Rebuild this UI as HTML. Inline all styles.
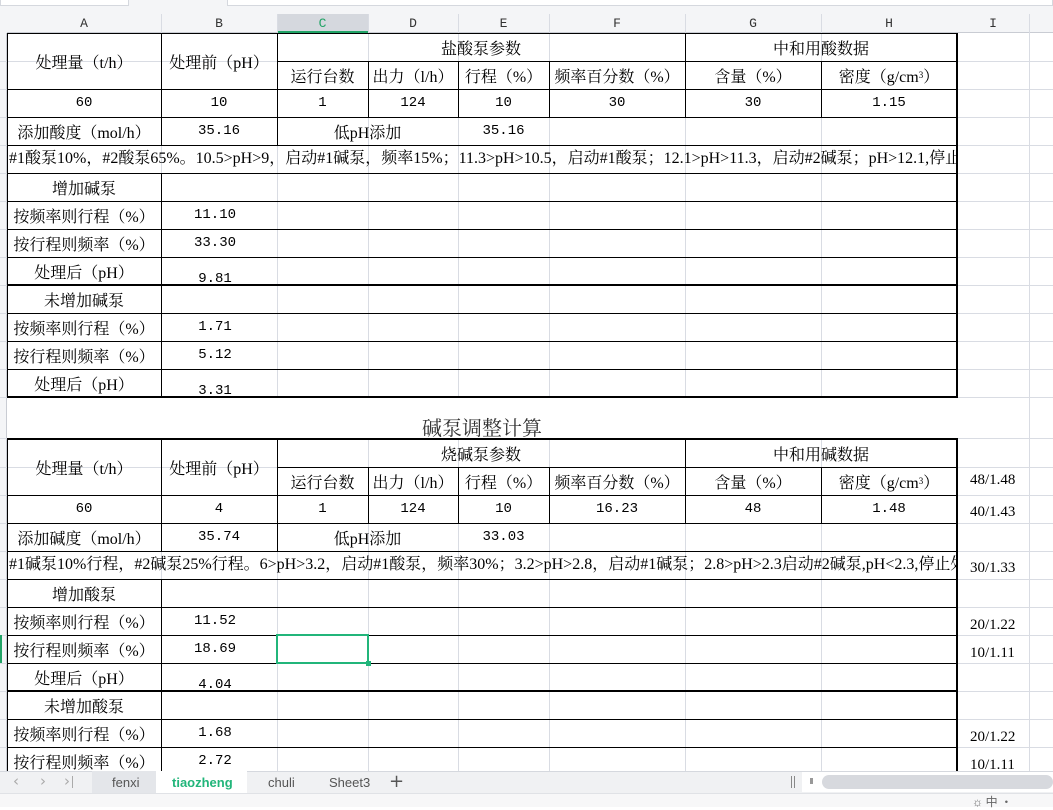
<!DOCTYPE html>
<html><head><meta charset="utf-8"><style>
*{margin:0;padding:0;box-sizing:border-box}
body{width:1053px;height:807px;overflow:hidden;background:#fff;position:relative;font-family:"Liberation Serif","Noto Serif CJK SC",serif;color:#000}
.a{position:absolute}
.g{position:absolute;background:#d9dce3}
.k{position:absolute;background:#000}
.c{position:absolute;display:flex;align-items:center;justify-content:center;white-space:nowrap;font-size:16px;height:28px}
.n{font-family:"Liberation Mono",monospace;font-size:14px}
.lo{align-items:flex-end;padding-bottom:0px;height:32px}
.h{position:absolute;top:14px;height:19px;font-family:"Liberation Mono",monospace;font-size:13px;color:#333;display:flex;align-items:center;justify-content:center}
.i{position:absolute;left:970px;font-size:15px;font-family:"Liberation Serif",serif}
.t{position:absolute;left:9px;width:948px;overflow:hidden;white-space:nowrap;font-size:16px;height:28px;line-height:28px}
sup{font-size:9px}
</style></head><body>
<div class="a" style="left:0;top:0;width:1053px;height:14px;background:#f4f5f7"></div>
<div class="a" style="left:0;top:0;width:129px;height:6px;background:#fff;border:1px solid #d5d8de;border-top:none"></div>
<div class="a" style="left:227px;top:0;width:826px;height:6px;background:#fff;border:1px solid #d5d8de;border-top:none"></div>
<div class="a" style="left:0;top:14px;width:1053px;height:19px;background:#f4f5f7;border-bottom:1px solid #c9ccd3"></div>
<div class="a" style="left:277px;top:14px;width:91px;height:19px;background:#d5d8de;border-bottom:2px solid #21a366"></div>
<div class="a" style="left:0;top:14px;width:7px;height:757px;background:#f4f5f7;border-right:1px solid #c9ccd3"></div>
<div class="h" style="left:7px;width:154px">A</div>
<div class="h" style="left:161px;width:116px">B</div>
<div class="h" style="left:277px;width:91px;color:#21a366">C</div>
<div class="h" style="left:368px;width:90px">D</div>
<div class="h" style="left:458px;width:91px">E</div>
<div class="h" style="left:549px;width:136px">F</div>
<div class="h" style="left:685px;width:136px">G</div>
<div class="h" style="left:821px;width:136px">H</div>
<div class="h" style="left:957px;width:72px">I</div>
<div class="g" style="left:161px;top:14px;width:1px;height:757px"></div>
<div class="g" style="left:277px;top:14px;width:1px;height:757px"></div>
<div class="g" style="left:368px;top:14px;width:1px;height:757px"></div>
<div class="g" style="left:458px;top:14px;width:1px;height:757px"></div>
<div class="g" style="left:549px;top:14px;width:1px;height:757px"></div>
<div class="g" style="left:685px;top:14px;width:1px;height:757px"></div>
<div class="g" style="left:821px;top:14px;width:1px;height:757px"></div>
<div class="g" style="left:1029px;top:14px;width:1px;height:757px"></div>
<div class="g" style="left:0;top:61px;width:1053px;height:1px"></div>
<div class="g" style="left:0;top:89px;width:1053px;height:1px"></div>
<div class="g" style="left:0;top:117px;width:1053px;height:1px"></div>
<div class="g" style="left:0;top:145px;width:1053px;height:1px"></div>
<div class="g" style="left:0;top:173px;width:1053px;height:1px"></div>
<div class="g" style="left:0;top:201px;width:1053px;height:1px"></div>
<div class="g" style="left:0;top:229px;width:1053px;height:1px"></div>
<div class="g" style="left:0;top:257px;width:1053px;height:1px"></div>
<div class="g" style="left:0;top:285px;width:1053px;height:1px"></div>
<div class="g" style="left:0;top:313px;width:1053px;height:1px"></div>
<div class="g" style="left:0;top:341px;width:1053px;height:1px"></div>
<div class="g" style="left:0;top:369px;width:1053px;height:1px"></div>
<div class="g" style="left:0;top:397px;width:1053px;height:1px"></div>
<div class="g" style="left:0;top:438px;width:1053px;height:1px"></div>
<div class="g" style="left:0;top:467px;width:1053px;height:1px"></div>
<div class="g" style="left:0;top:495px;width:1053px;height:1px"></div>
<div class="g" style="left:0;top:523px;width:1053px;height:1px"></div>
<div class="g" style="left:0;top:551px;width:1053px;height:1px"></div>
<div class="g" style="left:0;top:579px;width:1053px;height:1px"></div>
<div class="g" style="left:0;top:607px;width:1053px;height:1px"></div>
<div class="g" style="left:0;top:635px;width:1053px;height:1px"></div>
<div class="g" style="left:0;top:663px;width:1053px;height:1px"></div>
<div class="g" style="left:0;top:691px;width:1053px;height:1px"></div>
<div class="g" style="left:0;top:719px;width:1053px;height:1px"></div>
<div class="g" style="left:0;top:747px;width:1053px;height:1px"></div>
<div class="a" style="left:0;top:14px;width:7px;height:19px;background:#f4f5f7"></div>
<div class="a" style="left:0;top:635px;width:2px;height:28px;background:#21a366"></div>

<div class="k" style="left:7px;top:33px;width:950px;height:1px"></div>
<div class="k" style="left:277px;top:61px;width:680px;height:1px"></div>
<div class="k" style="left:7px;top:89px;width:950px;height:1px"></div>
<div class="k" style="left:7px;top:117px;width:950px;height:1px"></div>
<div class="k" style="left:7px;top:145px;width:950px;height:1px"></div>
<div class="k" style="left:7px;top:173px;width:950px;height:1px"></div>
<div class="k" style="left:7px;top:201px;width:950px;height:1px"></div>
<div class="k" style="left:7px;top:229px;width:950px;height:1px"></div>
<div class="k" style="left:7px;top:257px;width:950px;height:1px"></div>
<div class="k" style="left:7px;top:284px;width:950px;height:2px"></div>
<div class="k" style="left:7px;top:313px;width:950px;height:1px"></div>
<div class="k" style="left:7px;top:341px;width:950px;height:1px"></div>
<div class="k" style="left:7px;top:369px;width:950px;height:1px"></div>
<div class="k" style="left:7px;top:396px;width:950px;height:2px"></div>
<div class="k" style="left:7px;top:33px;width:1px;height:364px"></div>
<div class="k" style="left:161px;top:33px;width:1px;height:112px"></div>
<div class="k" style="left:161px;top:173px;width:1px;height:224px"></div>
<div class="k" style="left:277px;top:33px;width:1px;height:112px"></div>
<div class="k" style="left:368px;top:61px;width:1px;height:56px"></div>
<div class="k" style="left:458px;top:61px;width:1px;height:56px"></div>
<div class="k" style="left:549px;top:61px;width:1px;height:56px"></div>
<div class="k" style="left:685px;top:33px;width:1px;height:84px"></div>
<div class="k" style="left:821px;top:61px;width:1px;height:56px"></div>
<div class="k" style="left:956px;top:33px;width:2px;height:365px"></div>

<div class="c" style="left:7px;top:33px;width:154px;height:56px">处理量（t/h）</div>
<div class="c" style="left:161px;top:33px;width:116px;height:56px">处理前（pH）</div>
<div class="c" style="left:277px;top:33px;width:408px">盐酸泵参数</div>
<div class="c" style="left:685px;top:33px;width:272px">中和用酸数据</div>
<div class="c" style="left:277px;top:61px;width:91px">运行台数</div>
<div class="c" style="left:368px;top:61px;width:90px">出力（l/h）</div>
<div class="c" style="left:458px;top:61px;width:91px">行程（%）</div>
<div class="c" style="left:549px;top:61px;width:136px">频率百分数（%）</div>
<div class="c" style="left:685px;top:61px;width:136px">含量（%）</div>
<div class="c" style="left:821px;top:61px;width:136px">密度（g/cm<sup>3</sup>）</div>
<div class="c n" style="left:7px;top:89px;width:154px">60</div>
<div class="c n" style="left:161px;top:89px;width:116px">10</div>
<div class="c n" style="left:277px;top:89px;width:91px">1</div>
<div class="c n" style="left:368px;top:89px;width:90px">124</div>
<div class="c n" style="left:458px;top:89px;width:91px">10</div>
<div class="c n" style="left:549px;top:89px;width:136px">30</div>
<div class="c n" style="left:685px;top:89px;width:136px">30</div>
<div class="c n" style="left:821px;top:89px;width:136px">1.15</div>
<div class="c" style="left:7px;top:117px;width:154px">添加酸度（mol/h）</div>
<div class="c n" style="left:161px;top:117px;width:116px">35.16</div>
<div class="c" style="left:277px;top:117px;width:181px">低pH添加</div>
<div class="c n" style="left:458px;top:117px;width:91px">35.16</div>
<div class="t" style="top:145px">#1酸泵10%，#2酸泵65%。10.5&gt;pH&gt;9，启动#1碱泵，频率15%；11.3&gt;pH&gt;10.5，启动#1酸泵；12.1&gt;pH&gt;11.3，启动#2碱泵；pH&gt;12.1,停止处理</div>
<div class="c" style="left:7px;top:173px;width:154px">增加碱泵</div>
<div class="c" style="left:7px;top:201px;width:154px">按频率则行程（%）</div>
<div class="c n" style="left:161px;top:201px;width:108px">11.10</div>
<div class="c" style="left:7px;top:229px;width:154px">按行程则频率（%）</div>
<div class="c n" style="left:161px;top:229px;width:108px">33.30</div>
<div class="c" style="left:7px;top:257px;width:154px">处理后（pH）</div>
<div class="c n lo" style="left:161px;top:255px;width:108px">9.81</div>
<div class="c" style="left:7px;top:285px;width:154px">未增加碱泵</div>
<div class="c" style="left:7px;top:313px;width:154px">按频率则行程（%）</div>
<div class="c n" style="left:161px;top:313px;width:108px">1.71</div>
<div class="c" style="left:7px;top:341px;width:154px">按行程则频率（%）</div>
<div class="c n" style="left:161px;top:341px;width:108px">5.12</div>
<div class="c" style="left:7px;top:369px;width:154px">处理后（pH）</div>
<div class="c n lo" style="left:161px;top:367px;width:108px">3.31</div>

<div class="a" style="left:8px;top:398px;width:948px;height:40px;background:#fff"></div>
<div class="c" style="left:7px;top:412px;width:950px;font-size:20px;color:#333">碱泵调整计算</div>

<div class="k" style="left:7px;top:438px;width:950px;height:2px"></div>
<div class="k" style="left:277px;top:467px;width:680px;height:1px"></div>
<div class="k" style="left:7px;top:495px;width:950px;height:1px"></div>
<div class="k" style="left:7px;top:523px;width:950px;height:1px"></div>
<div class="k" style="left:7px;top:551px;width:950px;height:1px"></div>
<div class="k" style="left:7px;top:579px;width:950px;height:1px"></div>
<div class="k" style="left:7px;top:607px;width:950px;height:1px"></div>
<div class="k" style="left:7px;top:635px;width:950px;height:1px"></div>
<div class="k" style="left:7px;top:663px;width:950px;height:1px"></div>
<div class="k" style="left:7px;top:690px;width:950px;height:2px"></div>
<div class="k" style="left:7px;top:719px;width:950px;height:1px"></div>
<div class="k" style="left:7px;top:747px;width:950px;height:1px"></div>
<div class="k" style="left:7px;top:438px;width:1px;height:333px"></div>
<div class="k" style="left:161px;top:438px;width:1px;height:113px"></div>
<div class="k" style="left:161px;top:579px;width:1px;height:192px"></div>
<div class="k" style="left:277px;top:438px;width:1px;height:113px"></div>
<div class="k" style="left:368px;top:467px;width:1px;height:56px"></div>
<div class="k" style="left:458px;top:467px;width:1px;height:56px"></div>
<div class="k" style="left:549px;top:467px;width:1px;height:56px"></div>
<div class="k" style="left:685px;top:438px;width:1px;height:85px"></div>
<div class="k" style="left:821px;top:467px;width:1px;height:56px"></div>
<div class="k" style="left:956px;top:438px;width:2px;height:333px"></div>

<div class="c" style="left:7px;top:439px;width:154px;height:56px">处理量（t/h）</div>
<div class="c" style="left:161px;top:439px;width:116px;height:56px">处理前（pH）</div>
<div class="c" style="left:277px;top:439px;width:408px">烧碱泵参数</div>
<div class="c" style="left:685px;top:439px;width:272px">中和用碱数据</div>
<div class="c" style="left:277px;top:467px;width:91px">运行台数</div>
<div class="c" style="left:368px;top:467px;width:90px">出力（l/h）</div>
<div class="c" style="left:458px;top:467px;width:91px">行程（%）</div>
<div class="c" style="left:549px;top:467px;width:136px">频率百分数（%）</div>
<div class="c" style="left:685px;top:467px;width:136px">含量（%）</div>
<div class="c" style="left:821px;top:467px;width:136px">密度（g/cm<sup>3</sup>）</div>
<div class="c n" style="left:7px;top:495px;width:154px">60</div>
<div class="c n" style="left:161px;top:495px;width:116px">4</div>
<div class="c n" style="left:277px;top:495px;width:91px">1</div>
<div class="c n" style="left:368px;top:495px;width:90px">124</div>
<div class="c n" style="left:458px;top:495px;width:91px">10</div>
<div class="c n" style="left:549px;top:495px;width:136px">16.23</div>
<div class="c n" style="left:685px;top:495px;width:136px">48</div>
<div class="c n" style="left:821px;top:495px;width:136px">1.48</div>
<div class="c" style="left:7px;top:523px;width:154px">添加碱度（mol/h）</div>
<div class="c n" style="left:161px;top:523px;width:116px">35.74</div>
<div class="c" style="left:277px;top:523px;width:181px">低pH添加</div>
<div class="c n" style="left:458px;top:523px;width:91px">33.03</div>
<div class="t" style="top:551px">#1碱泵10%行程，#2碱泵25%行程。6&gt;pH&gt;3.2，启动#1酸泵，频率30%；3.2&gt;pH&gt;2.8，启动#1碱泵；2.8&gt;pH&gt;2.3启动#2碱泵,pH&lt;2.3,停止处理</div>
<div class="c" style="left:7px;top:579px;width:154px">增加酸泵</div>
<div class="c" style="left:7px;top:607px;width:154px">按频率则行程（%）</div>
<div class="c n" style="left:161px;top:607px;width:108px">11.52</div>
<div class="c" style="left:7px;top:635px;width:154px">按行程则频率（%）</div>
<div class="c n" style="left:161px;top:635px;width:108px">18.69</div>
<div class="c" style="left:7px;top:663px;width:154px">处理后（pH）</div>
<div class="c n lo" style="left:161px;top:661px;width:108px">4.04</div>
<div class="c" style="left:7px;top:691px;width:154px">未增加酸泵</div>
<div class="c" style="left:7px;top:719px;width:154px">按频率则行程（%）</div>
<div class="c n" style="left:161px;top:719px;width:108px">1.68</div>
<div class="c" style="left:7px;top:747px;width:154px">按行程则频率（%）</div>
<div class="c n" style="left:161px;top:747px;width:108px">2.72</div>

<div class="a" style="left:276px;top:634px;width:93px;height:30px;border:2px solid #21b57a"></div>
<div class="a" style="left:366px;top:661px;width:5px;height:5px;background:#21b57a"></div>

<div class="i" style="top:472px">48/1.48</div>
<div class="i" style="top:504px">40/1.43</div>
<div class="i" style="top:560px">30/1.33</div>
<div class="i" style="top:617px">20/1.22</div>
<div class="i" style="top:645px">10/1.11</div>
<div class="i" style="top:729px">20/1.22</div>
<div class="i" style="top:757px">10/1.11</div>

<div class="a" style="left:0;top:771px;width:1053px;height:22px;background:#f0f1f3;border-top:1px solid #d5d8de"></div>
<div class="a" style="left:92px;top:771px;width:64px;height:22px;background:#e4e6ea"></div>
<div class="a" style="left:156px;top:771px;width:91px;height:22px;background:#fff"></div>
<div class="a" style="left:13px;top:772px;font-family:'DejaVu Sans',sans-serif;font-size:15px;color:#aaa">‹</div>
<div class="a" style="left:40px;top:772px;font-family:'DejaVu Sans',sans-serif;font-size:15px;color:#aaa">›</div>
<div class="a" style="left:64px;top:772px;font-family:'DejaVu Sans',sans-serif;font-size:15px;color:#aaa">›</div>
<div class="a" style="left:72px;top:776px;width:1px;height:12px;background:#aaa"></div>
<div class="a" style="left:112px;top:775px;font-family:'Liberation Sans',sans-serif;font-size:13px;color:#555">fenxi</div>
<div class="a" style="left:172px;top:775px;font-family:'Liberation Sans',sans-serif;font-size:13px;color:#21b57a;font-weight:bold">tiaozheng</div>
<div class="a" style="left:268px;top:775px;font-family:'Liberation Sans',sans-serif;font-size:13px;color:#555">chuli</div>
<div class="a" style="left:329px;top:775px;font-family:'Liberation Sans',sans-serif;font-size:13px;color:#555">Sheet3</div>
<div class="a" style="left:389px;top:771px;font-family:'DejaVu Sans',sans-serif;font-size:18px;color:#555">+</div>
<div class="a" style="left:791px;top:776px;width:1px;height:12px;background:#888"></div>
<div class="a" style="left:794px;top:776px;width:1px;height:12px;background:#888"></div>
<div class="a" style="left:802px;top:772px;width:251px;height:20px;background:#fff"></div>
<div class="a" style="left:810px;top:778px;width:3px;height:6px;background:#999"></div>
<div class="a" style="left:822px;top:775px;width:231px;height:14px;background:#d7d9de;border-radius:7px"></div>
<div class="a" style="left:0;top:793px;width:1053px;height:14px;background:#f7f7f8;border-top:1px solid #e0e2e6"></div>
<div class="a" style="left:972px;top:797px;font-size:12px;color:#666;font-family:'Noto Sans CJK SC',sans-serif;line-height:10px">☼ 中 ·</div>
</body></html>
